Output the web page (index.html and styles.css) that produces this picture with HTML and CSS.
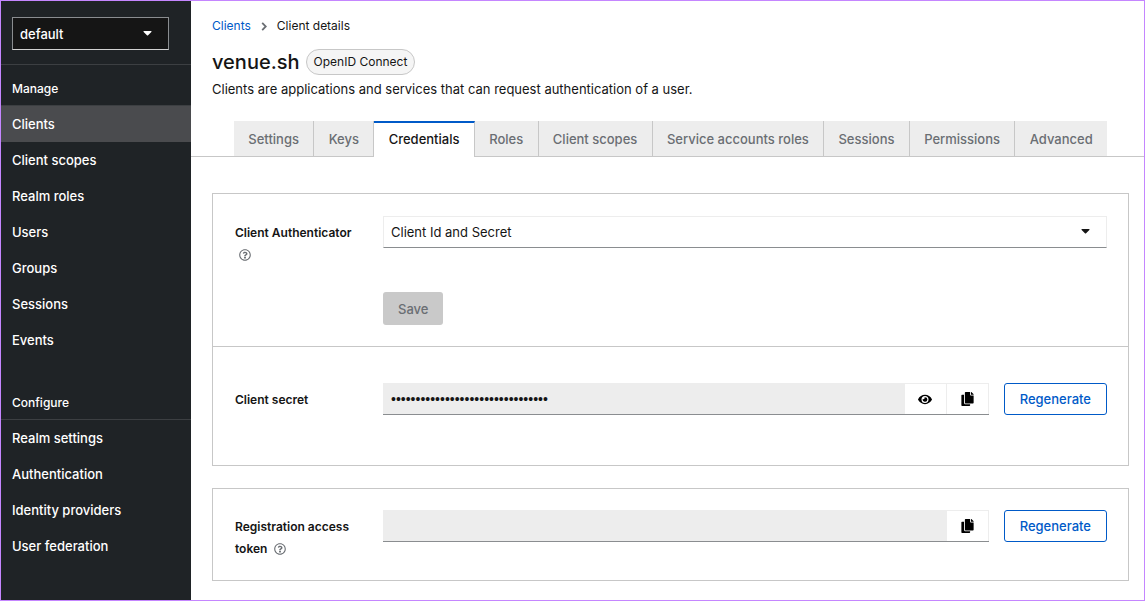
FILE: index.html
```html
<!DOCTYPE html>
<html lang="en">
<head>
  <meta charset="UTF-8">
  <meta name="viewport" content="width=device-width, initial-scale=1.0">
  <title>Client details</title>
  <link rel="stylesheet" href="styles.css">
</head>
<body>
  <!-- Shared icons -->
  <svg class="sprite" aria-hidden="true">
    <symbol id="caret" viewBox="0 0 10 6"><path d="M1 0h8c.8 0 1.100.8.6 1.300L5.700 5.200a1 1 0 0 1-1.400 0L.4 1.300C-.1.8.2 0 1 0z"/></symbol>
    <symbol id="help" viewBox="0 0 512 512"><path d="M256 8C119 8 8 119 8 256s111 248 248 248 248-111 248-248S393 8 256 8zm0 448c-110.500 0-200-89.500-200-200S145.500 56 256 56s200 89.500 200 200-89.500 200-200 200zm107-255c0 67-72.400 68-72.400 93v6c0 7-5.400 12-12 12h-45c-6.600 0-12-5-12-12v-9c0-35 27-49 47-61 17-10 28-16 28-29 0-17-22-28-39-28-23 0-33 11-48 29-4 5-12 6-17 2l-27-21c-5-4-6-11-3-17 23-34 53-53 100-53 49 0 101 38 101 88zM298 368c0 23-19 42-42 42s-42-19-42-42 19-42 42-42 42 19 42 42z"/></symbol>
    <symbol id="eye" viewBox="0 0 576 512"><path d="M572.500 241.400C518.300 135.600 410.900 64 288 64S57.700 135.600 3.500 241.400a32.400 32.400 0 0 0 0 29.200C57.700 376.400 165.100 448 288 448s230.300-71.600 284.500-177.400a32.400 32.400 0 0 0 0-29.200zM288 400a144 144 0 1 1 144-144 143.900 143.900 0 0 1-144 144zm0-240a95.300 95.300 0 0 0-25.300 3.800 47.900 47.900 0 0 1-66.900 66.900A95.800 95.800 0 1 0 288 160z"/></symbol>
    <symbol id="copy" viewBox="0 0 448 512"><path d="M320 448v40c0 13.300-10.700 24-24 24H24c-13.300 0-24-10.700-24-24V120c0-13.300 10.700-24 24-24h72v296c0 30.900 25.100 56 56 56h168zm0-344V0H152c-13.300 0-24 10.700-24 24v368c0 13.300 10.700 24 24 24h272c13.300 0 24-10.700 24-24V128H344c-13.200 0-24-10.800-24-24zm121-31L375 7A24 24 0 0 0 358 0h-6v96h96v-6.100a24 24 0 0 0-7-17z"/></symbol>
  </svg>

  <div class="page">
    <nav class="sidebar" aria-label="Main">
      <div class="realm">
        <div class="select-wrap">
          <select class="realm-select" aria-label="Realm">
            <option>default</option>
          </select>
          <svg class="caret"><use href="#caret"/></svg>
        </div>
      </div>
      <section class="nav-section">
        <h2>Manage</h2>
        <ul>
          <li><a class="current" href="#clients" aria-current="page">Clients</a></li>
          <li><a href="#client-scopes">Client scopes</a></li>
          <li><a href="#roles">Realm roles</a></li>
          <li><a href="#users">Users</a></li>
          <li><a href="#groups">Groups</a></li>
          <li><a href="#sessions">Sessions</a></li>
          <li><a href="#events">Events</a></li>
        </ul>
      </section>
      <section class="nav-section">
        <h2>Configure</h2>
        <ul>
          <li><a href="#realm-settings">Realm settings</a></li>
          <li><a href="#authentication">Authentication</a></li>
          <li><a href="#identity-providers">Identity providers</a></li>
          <li><a href="#user-federation">User federation</a></li>
        </ul>
      </section>
    </nav>

    <main>
      <header class="page-header">
        <nav class="breadcrumb" aria-label="Breadcrumb">
          <a href="#clients">Clients</a>
          <svg viewBox="0 0 6 10"><path d="M1 1l4 4-4 4"/></svg>
          <span>Client details</span>
        </nav>
        <div class="title">
          <h1>venue.sh</h1>
          <span class="chip">OpenID Connect</span>
        </div>
        <p>Clients are applications and services that can request authentication of a user.</p>
      </header>

      <div class="tabs" role="tablist">
        <button type="button" role="tab">Settings</button>
        <button type="button" role="tab">Keys</button>
        <button type="button" role="tab" class="active" aria-selected="true">Credentials</button>
        <button type="button" role="tab">Roles</button>
        <button type="button" role="tab">Client scopes</button>
        <button type="button" role="tab">Service accounts roles</button>
        <button type="button" role="tab">Sessions</button>
        <button type="button" role="tab">Permissions</button>
        <button type="button" role="tab">Advanced</button>
      </div>

      <form class="content">
        <div class="card">
          <div class="card-body authenticator">
            <div class="group-label">
              <label for="authenticator">Client Authenticator</label>
              <button type="button" class="help" aria-label="Help for client authenticator"><svg><use href="#help"/></svg></button>
            </div>
            <div class="select-wrap">
              <select id="authenticator" class="form-select">
                <option>Client Id and Secret</option>
              </select>
              <svg class="caret"><use href="#caret"/></svg>
            </div>
            <button type="submit" class="save" disabled>Save</button>
          </div>
          <div class="card-body secret">
            <div class="group-label">
              <label for="secret">Client secret</label>
            </div>
            <div class="control">
              <div class="input-group">
                <input id="secret" type="password" value="0123456789abcdef0123456789abcdef" readonly>
                <button type="button" aria-label="Show secret"><svg class="eye"><use href="#eye"/></svg></button>
                <button type="button" aria-label="Copy secret"><svg class="copy"><use href="#copy"/></svg></button>
              </div>
              <button type="button" class="regenerate">Regenerate</button>
            </div>
          </div>
        </div>

        <div class="card">
          <div class="card-body">
            <div class="group-label">
              <label for="token">Registration access token</label>
              <button type="button" class="help" aria-label="Help for registration access token"><svg><use href="#help"/></svg></button>
            </div>
            <div class="control">
              <div class="input-group">
                <input id="token" type="text" readonly>
                <button type="button" aria-label="Copy token"><svg class="copy"><use href="#copy"/></svg></button>
              </div>
              <button type="button" class="regenerate">Regenerate</button>
            </div>
          </div>
        </div>
      </form>
    </main>
  </div>
</body>
</html>
```
FILE: styles.css
```css
* {
  box-sizing: border-box;
}
body {
  margin: 0;
  font-family: Inter, "Liberation Sans", sans-serif;
  font-size: 13px;
  line-height: 20px;
  color: #151515;
  background: #fff;
}
button, input, select {
  font: inherit;
  color: inherit;
  margin: 0;
}
button {
  cursor: pointer;
}
a {
  text-decoration: none;
}
h1, h2, p, ul {
  margin: 0;
  padding: 0;
}
.sprite {
  display: none;
}
.page {
  display: flex;
  min-height: 100vh;
  border: 1px solid #c586ff;
}

/* Sidebar */
.sidebar {
  flex: 0 0 190px;
  color: #fff;
  background: #1f2326;
  font-weight: 500;
}
.realm {
  padding: 16px 22px 14px 11px;
  border-bottom: 1px solid #3c3f42;
}
.select-wrap {
  position: relative;
}
.select-wrap select {
  display: block;
  width: 100%;
  padding: 0 7px;
  border-radius: 0;
  appearance: none;
}
.caret {
  position: absolute;
  top: 50%;
  right: 17px;
  width: 9px;
  height: 5px;
  margin-top: -3px;
  fill: currentColor;
  pointer-events: none;
}
.realm-select {
  height: 33px;
  border: 1px solid #8a8d90;
  border-bottom-color: #d2d2d2;
  background: #151515;
}
.nav-section {
  margin-bottom: 21px;
}
.nav-section h2 {
  padding: 14px 11px 6px;
  border-bottom: 1px solid #3c3f42;
  font-size: 12px;
  font-weight: 500;
}
.nav-section ul {
  list-style: none;
}
.nav-section a {
  display: block;
  padding: 8px 11px;
  color: #fff;
}
.nav-section a.current {
  background: #4a4b4e;
}

/* Header */
main {
  flex: 1;
  min-width: 0;
}
.page-header {
  padding: 15px 21px 22px;
}
.breadcrumb {
  display: flex;
  align-items: center;
  gap: 10px;
  font-size: 12px;
}
.breadcrumb a {
  color: #005ac8;
}
.breadcrumb svg {
  width: 6px;
  height: 9px;
  fill: none;
  stroke: #6a6e73;
  stroke-width: 2;
}
.title {
  display: flex;
  align-items: center;
  gap: 6px;
  margin-top: 13px;
}
.title h1 {
  font-size: 20px;
  font-weight: 500;
}
.chip {
  padding: 2px 7px;
  border: 1px solid #c7c7c7;
  border-radius: 13px;
  font-size: 12px;
  background: #f5f5f5;
}
.page-header p {
  margin-top: 4px;
}

/* Tabs */
.tabs {
  display: flex;
  padding: 0 37px 0 43px;
  border-bottom: 1px solid #c7c7c7;
}
.tabs button {
  flex: 1 1 auto;
  height: 35px;
  padding: 0 14px;
  border: 0;
  border-right: 1px solid #c7c7c7;
  color: #6a6e73;
  background: #ededed;
  font-weight: 500;
}
.tabs button:last-child {
  border-right: 0;
}
.tabs button.active {
  height: 36px;
  margin-bottom: -1px;
  padding-bottom: 2px;
  border-top: 2px solid #005ac8;
  color: #151515;
  background: #fff;
}

/* Cards */
.content {
  display: flex;
  flex-direction: column;
  gap: 22px;
  padding: 36px 15px 16px 21px;
}
.card {
  border: 1px solid #c7c7c7;
}
.card-body {
  display: grid;
  grid-template-columns: 126px 1fr;
  column-gap: 22px;
  padding: 21px 21px 38px 22px;
}
.authenticator {
  padding: 22px 21px 21px 22px;
  border-bottom: 1px solid #c7c7c7;
}
.secret {
  padding: 36px 21px 50px 22px;
}
.group-label {
  padding-top: 6px;
  line-height: 22px;
  font-size: 12px;
  font-weight: 600;
  margin-bottom: -18px;
}
.help {
  padding: 0 4px;
  border: 0;
  background: none;
  vertical-align: -2px;
}
.help svg {
  display: block;
  width: 12px;
  height: 12px;
  fill: #6a6e73;
}
.form-select {
  height: 32px;
  border: 1px solid #ededed;
  border-bottom-color: #8a8d90;
  background: #fff;
}
.save {
  grid-column: 2;
  justify-self: start;
  height: 33px;
  margin-top: 44px;
  padding: 0 15px;
  border: 0;
  border-radius: 3px;
  color: #6a6e73;
  background: #c9c9c9;
  font-weight: 500;
}
.control {
  display: flex;
  gap: 15px;
}
.input-group {
  display: flex;
  flex: 1;
  min-width: 0;
  height: 32px;
  border-bottom: 1px solid #8a8d90;
}
.input-group input {
  flex: 1;
  min-width: 0;
  padding: 0 8px;
  border: 0;
  border-radius: 0;
  background: #ededed;
}
.input-group input[type="password"] {
  font-family: "Liberation Sans", sans-serif;
  font-size: 14px;
}
.input-group button {
  display: flex;
  align-items: center;
  justify-content: center;
  width: 42px;
  padding: 0;
  border: 1px solid #ededed;
  border-width: 1px 1px 0 0;
  background: #fff;
}
.eye {
  width: 14px;
  height: 13px;
}
.copy {
  width: 13px;
  height: 14px;
}
.regenerate {
  height: 32px;
  padding: 0 15px;
  border: 1px solid #005ac8;
  border-radius: 3px;
  color: #005ac8;
  background: #fff;
  font-weight: 500;
}
```
